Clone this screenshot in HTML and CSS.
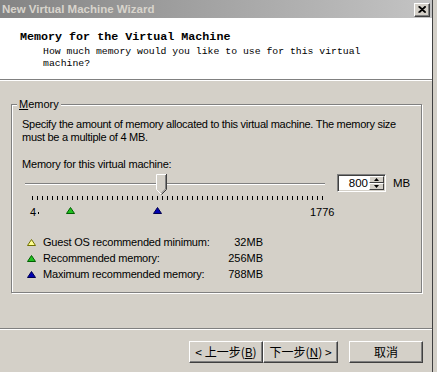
FILE: index.html
```html
<!DOCTYPE html>
<html>
<head>
<meta charset="utf-8">
<link rel="stylesheet" href="styles.css">
</head>
<body>
<div class="window">
  <div class="titlebar">
    <span class="title">New Virtual Machine Wizard</span>
    <span class="close">
      <svg width="8" height="7" viewBox="0 0 8 7"><path d="M0.5 0.5 L7 6.5 M1.5 0.5 L8 6.5 M7 0.5 L0.5 6.5 M8 0.5 L1.5 6.5" stroke="#000" stroke-width="1.1" fill="none"/></svg>
    </span>
  </div>
  <div class="header">
    <div class="heading">Memory for the Virtual Machine</div>
    <div class="subheading">How much memory would you like to use for this virtual<br>machine?</div>
  </div>
  <div class="content">
    <fieldset class="group">
      <legend class="group-title"><u>M</u>emory</legend>
      <p class="desc">Specify the amount of memory allocated to this virtual machine. The memory size<br>must be a multiple of 4 MB.</p>
      <p class="field-label">Memory for this virtual machine:</p>
      <div class="slider-row">
        <div class="slider">
          <div class="track-area">
            <div class="track"></div>
            <svg class="thumb" style="left:134px" width="11" height="21" viewBox="0 0 11 21">
              <polygon points="0,0 11,0 11,15 5.5,20.5 0,15" fill="#d4d0c8"/>
              <polyline points="0.5,15.5 0.5,0.5 10,0.5" stroke="#fff" fill="none"/>
              <polyline points="0.5,15.5 5,20" stroke="#fff" fill="none"/>
              <polyline points="10.5,0 10.5,15.5 5.5,20.5" stroke="#404040" fill="none"/>
              <polyline points="9.5,1 9.5,15 5.5,19" stroke="#808080" fill="none"/>
            </svg>
          </div>
          <div class="ticks"></div>
          <div class="scale">
            <span class="scale-label" style="left:8px">4</span>
            <span class="scale-dot" style="left:16px"></span>
            <svg class="marker" style="left:44px" width="9" height="7" viewBox="0 0 9 7"><polygon points="4.5,0.5 8.5,6.5 0.5,6.5" fill="#20c020" stroke="#006000"/></svg>
            <svg class="marker" style="left:131px" width="9" height="7" viewBox="0 0 9 7"><polygon points="4.5,0.5 8.5,6.5 0.5,6.5" fill="#0000b0" stroke="#000050"/></svg>
            <span class="scale-label" style="left:288px">1776</span>
          </div>
        </div>
        <div class="spin">
          <span class="spin-value">800</span>
          <span class="spin-buttons">
            <span class="spin-btn"><svg width="5" height="3" viewBox="0 0 5 3"><polygon points="2.5,0 5,3 0,3" fill="#000"/></svg></span>
            <span class="spin-btn"><svg width="5" height="3" viewBox="0 0 5 3"><polygon points="0,0 5,0 2.5,3" fill="#000"/></svg></span>
          </span>
        </div>
        <span class="unit">MB</span>
      </div>
      <div class="legend-list">
        <svg class="legend-icon" width="9" height="7" viewBox="0 0 9 7"><polygon points="4.5,0.5 8.5,6.5 0.5,6.5" fill="#ffff90" stroke="#707000"/></svg>
        <span class="legend-label">Guest OS recommended minimum:</span>
        <span class="legend-value">32MB</span>
        <svg class="legend-icon" width="9" height="7" viewBox="0 0 9 7"><polygon points="4.5,0.5 8.5,6.5 0.5,6.5" fill="#20c020" stroke="#006000"/></svg>
        <span class="legend-label">Recommended memory:</span>
        <span class="legend-value">256MB</span>
        <svg class="legend-icon" width="9" height="7" viewBox="0 0 9 7"><polygon points="4.5,0.5 8.5,6.5 0.5,6.5" fill="#0000b0" stroke="#000050"/></svg>
        <span class="legend-label">Maximum recommended memory:</span>
        <span class="legend-value">788MB</span>
      </div>
    </fieldset>
  </div>
  <div class="footer">
    <button class="btn btn-back">&lt; 上一步(<u>B</u>)</button>
    <button class="btn btn-next">下一步(<u>N</u>) &gt;</button>
    <button class="btn btn-cancel">取消</button>
  </div>
</div>
</body>
</html>
```

FILE: styles.css
```css
html, body {
  margin: 0;
  padding: 0;
}
body {
  width: 437px;
  height: 372px;
  overflow: hidden;
  background: #d4d0c8;
  font-family: "Liberation Sans", Arial, sans-serif;
  font-size: 11px;
  color: #000;
}
.window {
  width: 432px;
  height: 372px;
  border-right: 1px solid #404040;
  display: flex;
  flex-direction: column;
  background: #d4d0c8;
}
.titlebar {
  height: 18px;
  flex: none;
  background: linear-gradient(to right, #848484, #c4c4c4);
  display: flex;
  align-items: center;
  justify-content: space-between;
  padding: 0 2px 0 2px;
}
.title {
  color: #d8d4cc;
  font-weight: bold;
  font-size: 11.5px;
  line-height: 18px;
}
.close {
  width: 14px;
  height: 12px;
  margin-top: 1px;
  background: #d4d0c8;
  border-top: 1px solid #fff;
  border-left: 1px solid #fff;
  border-right: 1px solid #404040;
  border-bottom: 1px solid #404040;
  box-shadow: inset -1px -1px 0 #808080;
  display: flex;
  align-items: center;
  justify-content: center;
}
.header {
  height: 62px;
  flex: none;
  box-sizing: border-box;
  background: #fff;
  border-bottom: 1px solid #808080;
  box-shadow: 0 1px 0 #fff;
  padding: 12px 0 0 20px;
  font-family: "Liberation Mono", monospace;
}
.heading {
  font-weight: bold;
  font-size: 11.7px;
  line-height: 14px;
  height: 14px;
}
.subheading {
  font-size: 9.8px;
  line-height: 12px;
  margin: 2px 0 0 23px;
}
.content {
  flex: 1;
  padding-top: 18px;
}
.group {
  margin: 0 0 0 11px;
  width: 411px;
  height: 195px;
  box-sizing: border-box;
  min-width: 0;
  padding: 7px 10px 0 10px;
  border: 1px solid #808080;
  box-shadow: 1px 1px 0 #fff, inset 1px 1px 0 #fff;
}
.group-title {
  padding: 0 2px;
  margin-left: -5px;
  line-height: 13px;
  background: #d4d0c8;
}
.desc {
  margin: 0;
  line-height: 13px;
  letter-spacing: -0.28px;
}
.field-label {
  margin: 14px 0 0 0;
  line-height: 13px;
  letter-spacing: -0.2px;
}
.slider-row {
  display: flex;
  align-items: flex-start;
  margin-top: 3px;
}
.slider {
  width: 315px;
  flex: none;
}
.track-area {
  position: relative;
  height: 22px;
}
.track {
  position: relative;
  top: 9px;
  margin-left: 3px;
  width: 300px;
  height: 2px;
  box-sizing: border-box;
  border-top: 1px solid #808080;
  border-bottom: 1px solid #fff;
  background: #404040;
}
.thumb {
  position: absolute;
  top: 0;
  display: block;
}
.ticks {
  margin-left: 10px;
  width: 291px;
  height: 4px;
  background: repeating-linear-gradient(to right, #000 0, #000 1px, transparent 1px, transparent 5px);
}
.scale {
  position: relative;
  height: 14px;
  margin-top: 5px;
}
.scale-label {
  position: absolute;
  top: 0;
  line-height: 14px;
}
.scale-dot {
  position: absolute;
  top: 7px;
  width: 1px;
  height: 2px;
  background: #000;
}
.marker {
  position: absolute;
  top: 2px;
  display: block;
}
.spin {
  width: 49px;
  height: 18px;
  box-sizing: border-box;
  background: #fff;
  border-top: 1px solid #808080;
  border-left: 1px solid #808080;
  border-right: 1px solid #fff;
  border-bottom: 1px solid #fff;
  box-shadow: inset 1px 1px 0 #404040, inset -1px -1px 0 #d4d0c8;
  display: flex;
  padding: 1px 1px 1px 2px;
}
.spin-value {
  flex: 1;
  text-align: right;
  line-height: 14px;
  padding-right: 1px;
  font-size: 11.5px;
}
.spin-buttons {
  width: 15px;
  display: flex;
  flex-direction: column;
}
.spin-btn {
  flex: 1;
  box-sizing: border-box;
  background: #d4d0c8;
  border-top: 1px solid #fff;
  border-left: 1px solid #fff;
  border-right: 1px solid #404040;
  border-bottom: 1px solid #404040;
  display: flex;
  align-items: center;
  justify-content: center;
}
.spin-btn svg {
  display: block;
}
.unit {
  margin-left: 7px;
  line-height: 18px;
  font-size: 11.5px;
}
.legend-list {
  display: grid;
  grid-template-columns: 16px 170px 50px;
  grid-auto-rows: 16px;
  align-items: center;
  margin: 15px 0 0 5px;
}
.legend-icon {
  display: block;
}
.legend-label {
  line-height: 16px;
  white-space: nowrap;
  letter-spacing: -0.2px;
}
.legend-value {
  text-align: right;
  line-height: 16px;
}
.footer {
  flex: none;
  height: 44px;
  box-sizing: border-box;
  border-top: 1px solid #808080;
  box-shadow: inset 0 1px 0 #fff;
  display: flex;
  justify-content: flex-end;
  align-items: flex-start;
  padding: 12px 9px 0 0;
}
.btn {
  height: 22px;
  padding: 0;
  margin: 0;
  background: #d4d0c8;
  border-top: 1px solid #fff;
  border-left: 1px solid #fff;
  border-right: 1px solid #404040;
  border-bottom: 1px solid #404040;
  box-shadow: inset -1px -1px 0 #808080;
  font-family: "Noto Sans CJK SC", "Liberation Sans", sans-serif;
  font-size: 12px;
  line-height: 18px;
  color: #000;
}
.btn u {
  text-underline-offset: 1px;
}
.btn-back {
  width: 74px;
}
.btn-next {
  width: 75px;
}
.btn-cancel {
  width: 74px;
  margin-left: 11px;
}
```
